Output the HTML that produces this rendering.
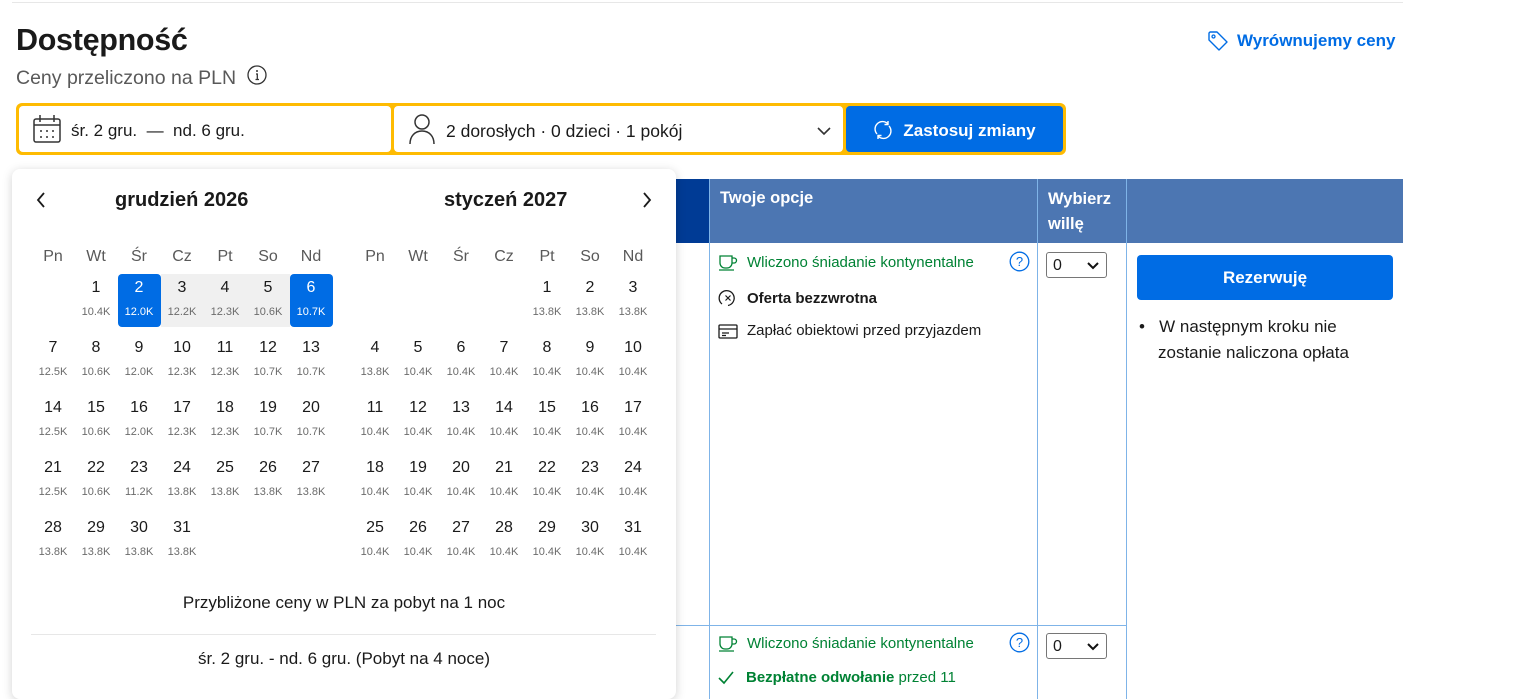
<!DOCTYPE html>
<html><head><meta charset="utf-8"><style>
*{box-sizing:border-box;margin:0;padding:0}
body{width:1534px;height:688px;overflow:hidden;background:#fff;font-family:"Liberation Sans",sans-serif;color:#1a1a1a;position:relative}
.a{position:absolute}
.topline{left:12px;top:2px;width:1391px;height:1px;background:#e7e7e7}
h1{position:absolute;left:16px;top:23px;font-size:30.5px;font-weight:700;letter-spacing:-0.3px}
.sub{left:16px;top:65px;font-size:19.5px;color:#595959}
.bar{left:16px;top:103px;width:1050px;height:52px;background:#febb02;border-radius:6px}
.f{background:#fff;border-radius:4px;top:3px;height:46px;display:flex;align-items:center;font-size:17px;padding-top:4px}
.btn{background:#006ce4;color:#fff;font-weight:700;font-size:17px;justify-content:center}
.cal{left:12px;top:169px;width:664px;height:530px;background:#fff;border-radius:8px;box-shadow:0 2px 10px rgba(0,0,0,.18);z-index:5}
.mt{top:20px;font-size:20px;font-weight:700}
.grid{top:76px;width:301px;display:flex;flex-wrap:wrap}
.c{width:43px;height:60px;text-align:center;position:relative}
.c .n{font-size:16px;position:absolute;top:5px;left:0;right:0}
.c .p{font-size:11px;color:#6b6b6b;position:absolute;top:32px;left:0;right:0}
.wd{width:43px;height:20px;text-align:center;font-size:16px;color:#595959;padding-top:2px}
.sel{background:#006ce4;border-radius:4px;color:#fff}
.sel .p{color:#fff}
.rng{background:#f0f0f0}
.th{top:179px;height:64px;background:#4c76b2;color:#fff;font-weight:700;font-size:16px}
.vl{width:1px;background:#7fb4e8}
.g{color:#008234}
</style></head><body>
<div class="a topline"></div>
<h1>Dostępność</h1>
<div class="a sub">Ceny przeliczono na PLN <svg style="vertical-align:-1px;margin-left:6px" width="20" height="20" viewBox="0 0 20 20"><circle cx="10" cy="10" r="9" fill="none" stroke="#333" stroke-width="1.3"/><circle cx="10" cy="6" r="1" fill="#333"/><path d="M9 9h1.3v5.5M8.5 14.5h3.5" stroke="#333" fill="none" stroke-width="1.3"/></svg></div>
<div class="a" style="left:1207px;top:30px;color:#006ce4;font-size:17px;font-weight:700;display:flex;align-items:center;gap:8px"><svg width="22" height="22" viewBox="0 0 22 22"><path d="M2 3v7l10 10 8-8L10 2H3z" fill="none" stroke="#006ce4" stroke-width="1.4" stroke-linejoin="round"/><circle cx="6.5" cy="6.5" r="1.5" fill="none" stroke="#006ce4" stroke-width="1.3"/></svg>Wyrównujemy ceny</div>
<div class="a bar">
 <div class="a f" style="left:3px;width:372px"><svg style="margin:-4px 8px 0 12px" width="32" height="32" viewBox="0 0 32 32"><rect x="3" y="6" width="26" height="23" rx="2" fill="none" stroke="#333" stroke-width="1.5"/><path d="M3 12h26M9 2v7M23 2v7" stroke="#333" stroke-width="1.5"/><g fill="#333"><circle cx="10" cy="18" r="1"/><circle cx="16" cy="18" r="1"/><circle cx="22" cy="18" r="1"/><circle cx="10" cy="24" r="1"/><circle cx="16" cy="24" r="1"/><circle cx="22" cy="24" r="1"/></g></svg>śr. 2 gru. &nbsp;—&nbsp; nd. 6 gru.</div>
 <div class="a f" style="left:378px;width:449px;font-size:17.5px"><svg style="margin:-4px 10px 0 14px" width="28" height="32" viewBox="0 0 28 32"><circle cx="14" cy="9" r="7" fill="none" stroke="#333" stroke-width="1.5"/><path d="M2 31c0-8 5-13 12-13s12 5 12 13" fill="none" stroke="#333" stroke-width="1.5"/></svg>2 dorosłych · 0 dzieci · 1 pokój<svg style="position:absolute;right:12px;top:20px" width="14" height="10" viewBox="0 0 14 10"><path d="M1 2l6 6 6-6" fill="none" stroke="#333" stroke-width="1.6"/></svg></div>
 <div class="a f btn" style="left:830px;width:217px"><svg style="margin:-3px 10px 0 0" width="20" height="20" viewBox="0 0 20 20"><path d="M4 14A7 7 0 0 1 15 4M16 6A7 7 0 0 1 5 16" fill="none" stroke="#fff" stroke-width="1.4"/><path d="M15 1v3.5h-3.5M5 19v-3.5h3.5" fill="none" stroke="#fff" stroke-width="1.4"/></svg>Zastosuj zmiany</div>
</div>

<div class="a th" style="left:676px;width:33px;background:#003b95"></div>
<div class="a th" style="left:709px;width:694px"></div>
<div class="a" style="left:720px;top:189px;color:#fff;font-weight:700;font-size:16.5px;z-index:2">Twoje opcje</div>
<div class="a" style="left:1048px;top:187px;color:#fff;font-weight:700;font-size:16.5px;line-height:25px;z-index:2">Wybierz<br>willę</div>
<div class="a vl" style="left:709px;top:179px;height:520px"></div>
<div class="a vl" style="left:1037px;top:179px;height:520px"></div>
<div class="a vl" style="left:1126px;top:179px;height:520px"></div>
<div class="a" style="left:676px;top:625px;width:451px;height:1px;background:#7fb4e8"></div>

<div class="a g" style="left:718px;top:254px;font-size:15px;display:flex;align-items:center;gap:9px"><svg width="20" height="16" viewBox="0 0 20 16"><path d="M2 1h12v7a5 5 0 0 1-5 5h-2a5 5 0 0 1-5-5zM14 3h2a2.5 2.5 0 0 1 0 5h-2M1 15h15" fill="none" stroke="#008234" stroke-width="1.3"/></svg>Wliczono śniadanie kontynentalne</div>
<svg class="a" style="left:1009px;top:251px" width="21" height="21" viewBox="0 0 21 21"><circle cx="10.5" cy="10.5" r="9.3" fill="none" stroke="#006ce4" stroke-width="1.3"/><text x="10.5" y="15" font-size="13" text-anchor="middle" fill="#006ce4" font-family="Liberation Sans">?</text></svg>
<div class="a" style="left:718px;top:288px;font-size:15px;font-weight:700;display:flex;align-items:center;gap:9px"><svg width="20" height="20" viewBox="0 0 20 20"><path d="M4 16A7.5 7.5 0 1 1 10 17.5" fill="none" stroke="#1a1a1a" stroke-width="1.3"/><path d="M7.5 7.5l5 5M12.5 7.5l-5 5" stroke="#1a1a1a" stroke-width="1.2"/></svg>Oferta bezzwrotna</div>
<div class="a" style="left:718px;top:322px;font-size:15px;display:flex;align-items:center;gap:9px"><svg width="20" height="16" viewBox="0 0 20 16"><rect x="1" y="2" width="18" height="13" rx="1" fill="none" stroke="#1a1a1a" stroke-width="1.3"/><path d="M1 6h18M4 10h7M4 12.5h4" stroke="#1a1a1a" stroke-width="1.2"/></svg>Zapłać obiektowi przed przyjazdem</div>
<div class="a" style="left:1046px;top:252px;width:61px;height:26px;border:1px solid #767676;border-radius:3px;font-size:16px;padding:4px 6px">0<svg style="position:absolute;right:7px;top:9px" width="12" height="8" viewBox="0 0 12 8"><path d="M1 1l5 5 5-5" fill="none" stroke="#111" stroke-width="2"/></svg></div>
<div class="a" style="left:1137px;top:255px;width:256px;height:45px;background:#006ce4;border-radius:4px;color:#fff;font-weight:700;font-size:17px;display:flex;align-items:center;justify-content:center">Rezerwuję</div>
<div class="a" style="left:1139px;top:314px;font-size:17px;line-height:26px">•&nbsp;&nbsp; W następnym kroku nie<br><span style="padding-left:19px">zostanie naliczona opłata</span></div>

<div class="a g" style="left:718px;top:635px;font-size:15px;display:flex;align-items:center;gap:9px"><svg width="20" height="16" viewBox="0 0 20 16"><path d="M2 1h12v7a5 5 0 0 1-5 5h-2a5 5 0 0 1-5-5zM14 3h2a2.5 2.5 0 0 1 0 5h-2M1 15h15" fill="none" stroke="#008234" stroke-width="1.3"/></svg>Wliczono śniadanie kontynentalne</div>
<svg class="a" style="left:1009px;top:632px" width="21" height="21" viewBox="0 0 21 21"><circle cx="10.5" cy="10.5" r="9.3" fill="none" stroke="#006ce4" stroke-width="1.3"/><text x="10.5" y="15" font-size="13" text-anchor="middle" fill="#006ce4" font-family="Liberation Sans">?</text></svg>
<div class="a g" style="left:718px;top:669px;font-size:15px;display:flex;align-items:center;gap:12px"><svg width="16" height="14" viewBox="0 0 16 14"><path d="M1 7l5 5L15 1" fill="none" stroke="#008234" stroke-width="1.6"/></svg><span><b>Bezpłatne odwołanie</b> przed 11</span></div>
<div class="a" style="left:1046px;top:633px;width:61px;height:26px;border:1px solid #767676;border-radius:3px;font-size:16px;padding:4px 6px">0<svg style="position:absolute;right:7px;top:9px" width="12" height="8" viewBox="0 0 12 8"><path d="M1 1l5 5 5-5" fill="none" stroke="#111" stroke-width="2"/></svg></div>

<div class="a cal">
 <svg class="a" style="left:23px;top:22px" width="12" height="18" viewBox="0 0 12 18"><path d="M9 2L3 9l6 7" fill="none" stroke="#1a1a1a" stroke-width="1.8"/></svg>
 <svg class="a" style="left:629px;top:22px" width="12" height="18" viewBox="0 0 12 18"><path d="M3 2l6 7-6 7" fill="none" stroke="#1a1a1a" stroke-width="1.8"/></svg>
 <div class="a mt" style="left:103px">grudzień 2026</div>
 <div class="a mt" style="left:432px">styczeń 2027</div>
 <div class="a" style="left:19.5px;top:77px;display:flex"><div class="wd">Pn</div><div class="wd">Wt</div><div class="wd">Śr</div><div class="wd">Cz</div><div class="wd">Pt</div><div class="wd">So</div><div class="wd">Nd</div></div>
 <div class="a" style="left:341.5px;top:77px;display:flex"><div class="wd">Pn</div><div class="wd">Wt</div><div class="wd">Śr</div><div class="wd">Cz</div><div class="wd">Pt</div><div class="wd">So</div><div class="wd">Nd</div></div>
 <div class="a grid" style="left:19.5px;top:105px">
  <div class="c"></div>
  <div class="c"><div class="n">1</div><div class="p">10.4K</div></div>
  <div class="c sel" style="height:53px"><div class="n">2</div><div class="p">12.0K</div></div>
  <div class="c rng" style="height:53px"><div class="n">3</div><div class="p">12.2K</div></div>
  <div class="c rng" style="height:53px"><div class="n">4</div><div class="p">12.3K</div></div>
  <div class="c rng" style="height:53px"><div class="n">5</div><div class="p">10.6K</div></div>
  <div class="c sel" style="height:53px;margin-bottom:7px"><div class="n">6</div><div class="p">10.7K</div></div>
  <div class="c"><div class="n">7</div><div class="p">12.5K</div></div><div class="c"><div class="n">8</div><div class="p">10.6K</div></div><div class="c"><div class="n">9</div><div class="p">12.0K</div></div><div class="c"><div class="n">10</div><div class="p">12.3K</div></div><div class="c"><div class="n">11</div><div class="p">12.3K</div></div><div class="c"><div class="n">12</div><div class="p">10.7K</div></div><div class="c"><div class="n">13</div><div class="p">10.7K</div></div>
  <div class="c"><div class="n">14</div><div class="p">12.5K</div></div><div class="c"><div class="n">15</div><div class="p">10.6K</div></div><div class="c"><div class="n">16</div><div class="p">12.0K</div></div><div class="c"><div class="n">17</div><div class="p">12.3K</div></div><div class="c"><div class="n">18</div><div class="p">12.3K</div></div><div class="c"><div class="n">19</div><div class="p">10.7K</div></div><div class="c"><div class="n">20</div><div class="p">10.7K</div></div>
  <div class="c"><div class="n">21</div><div class="p">12.5K</div></div><div class="c"><div class="n">22</div><div class="p">10.6K</div></div><div class="c"><div class="n">23</div><div class="p">11.2K</div></div><div class="c"><div class="n">24</div><div class="p">13.8K</div></div><div class="c"><div class="n">25</div><div class="p">13.8K</div></div><div class="c"><div class="n">26</div><div class="p">13.8K</div></div><div class="c"><div class="n">27</div><div class="p">13.8K</div></div>
  <div class="c"><div class="n">28</div><div class="p">13.8K</div></div><div class="c"><div class="n">29</div><div class="p">13.8K</div></div><div class="c"><div class="n">30</div><div class="p">13.8K</div></div><div class="c"><div class="n">31</div><div class="p">13.8K</div></div>
 </div>
 <div class="a grid" style="left:341.5px;top:105px">
  <div class="c"></div><div class="c"></div><div class="c"></div><div class="c"></div>
  <div class="c"><div class="n">1</div><div class="p">13.8K</div></div><div class="c"><div class="n">2</div><div class="p">13.8K</div></div><div class="c"><div class="n">3</div><div class="p">13.8K</div></div>
  <div class="c"><div class="n">4</div><div class="p">13.8K</div></div><div class="c"><div class="n">5</div><div class="p">10.4K</div></div><div class="c"><div class="n">6</div><div class="p">10.4K</div></div><div class="c"><div class="n">7</div><div class="p">10.4K</div></div><div class="c"><div class="n">8</div><div class="p">10.4K</div></div><div class="c"><div class="n">9</div><div class="p">10.4K</div></div><div class="c"><div class="n">10</div><div class="p">10.4K</div></div>
  <div class="c"><div class="n">11</div><div class="p">10.4K</div></div><div class="c"><div class="n">12</div><div class="p">10.4K</div></div><div class="c"><div class="n">13</div><div class="p">10.4K</div></div><div class="c"><div class="n">14</div><div class="p">10.4K</div></div><div class="c"><div class="n">15</div><div class="p">10.4K</div></div><div class="c"><div class="n">16</div><div class="p">10.4K</div></div><div class="c"><div class="n">17</div><div class="p">10.4K</div></div>
  <div class="c"><div class="n">18</div><div class="p">10.4K</div></div><div class="c"><div class="n">19</div><div class="p">10.4K</div></div><div class="c"><div class="n">20</div><div class="p">10.4K</div></div><div class="c"><div class="n">21</div><div class="p">10.4K</div></div><div class="c"><div class="n">22</div><div class="p">10.4K</div></div><div class="c"><div class="n">23</div><div class="p">10.4K</div></div><div class="c"><div class="n">24</div><div class="p">10.4K</div></div>
  <div class="c"><div class="n">25</div><div class="p">10.4K</div></div><div class="c"><div class="n">26</div><div class="p">10.4K</div></div><div class="c"><div class="n">27</div><div class="p">10.4K</div></div><div class="c"><div class="n">28</div><div class="p">10.4K</div></div><div class="c"><div class="n">29</div><div class="p">10.4K</div></div><div class="c"><div class="n">30</div><div class="p">10.4K</div></div><div class="c"><div class="n">31</div><div class="p">10.4K</div></div>
 </div>
 <div class="a" style="left:0;width:664px;top:424px;text-align:center;font-size:17px">Przybliżone ceny w PLN za pobyt na 1 noc</div>
 <div class="a" style="left:19px;top:465px;width:625px;height:1px;background:#e7e7e7"></div>
 <div class="a" style="left:0;width:664px;top:480px;text-align:center;font-size:17px">śr. 2 gru. - nd. 6 gru. (Pobyt na 4 noce)</div>
</div>
</body></html>
